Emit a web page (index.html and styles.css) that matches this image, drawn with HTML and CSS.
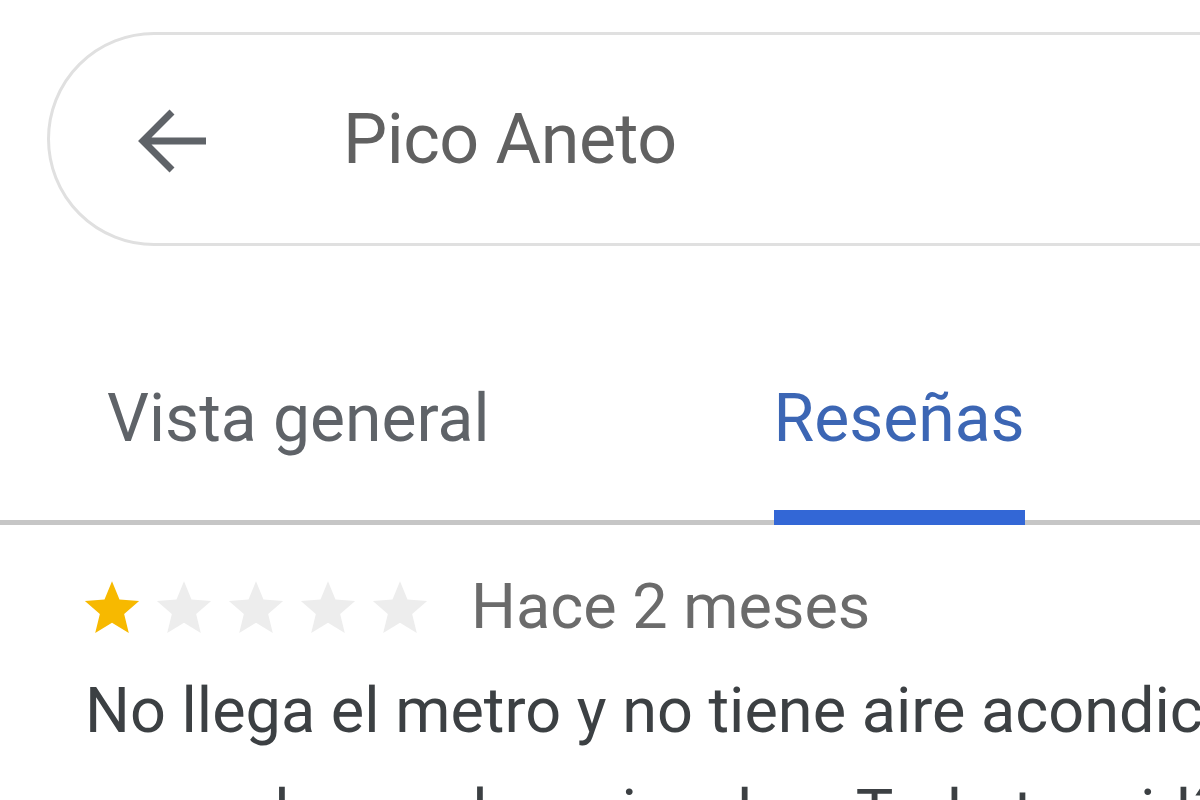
FILE: index.html
```html
<!DOCTYPE html>
<html lang="es">

<head>
    <meta charset="UTF-8">
    <meta name="viewport" content="width=device-width, initial-scale=1.0">
    <title>Pico Aneto - Reseñas</title>
    <link rel="stylesheet" href="styles.css">
</head>

<body>

    <!-- barra de busqueda -->
    <div class="search-wrap">
        <div class="search-box">
            <div class="back-btn">
                <svg width="72" height="66" viewBox="0 0 72 66">
                    <path d="M68 33 H6 M34 4 L5 33 L34 62" fill="none" stroke="#5f6368" stroke-width="7"
                        stroke-linecap="butt" stroke-linejoin="miter" />
                </svg>
            </div>
            <div class="search-text">Pico Aneto</div>
        </div>
    </div>

    <!-- pestañas -->
    <nav class="tabs">
        <a href="" class="tab">Vista general</a>
        <a href="" class="tab active">Reseñas</a>
    </nav>

    <!-- reseña -->
    <div class="review">
        <div class="review-head">
            <div class="stars">
                <svg class="star gold" viewBox="0 0 24 24"><path d="M12 2l2.9 7.1 7.6.6-5.8 5 1.8 7.4L12 18.1 5.5 22.1l1.8-7.4-5.8-5 7.6-.6z"/></svg>
                <svg class="star" viewBox="0 0 24 24"><path d="M12 2l2.9 7.1 7.6.6-5.8 5 1.8 7.4L12 18.1 5.5 22.1l1.8-7.4-5.8-5 7.6-.6z"/></svg>
                <svg class="star" viewBox="0 0 24 24"><path d="M12 2l2.9 7.1 7.6.6-5.8 5 1.8 7.4L12 18.1 5.5 22.1l1.8-7.4-5.8-5 7.6-.6z"/></svg>
                <svg class="star" viewBox="0 0 24 24"><path d="M12 2l2.9 7.1 7.6.6-5.8 5 1.8 7.4L12 18.1 5.5 22.1l1.8-7.4-5.8-5 7.6-.6z"/></svg>
                <svg class="star" viewBox="0 0 24 24"><path d="M12 2l2.9 7.1 7.6.6-5.8 5 1.8 7.4L12 18.1 5.5 22.1l1.8-7.4-5.8-5 7.6-.6z"/></svg>
            </div>
            <span class="review-date">Hace 2 meses</span>
        </div>
        <p class="review-text">No llega el metro y no tiene aire acondicionado<br>cansado y no hay ni un bar. Todo tan ridículo</p>
    </div>

</body>

</html>
```

FILE: styles.css
```css
* {
    font-family: Roboto, "Liberation Sans", sans-serif;
    text-decoration: none;
    box-sizing: border-box;
}

body {
    margin: 0;
    padding: 0;
    background-color: #ffffff;
    width: 1200px;
    height: 800px;
    overflow: hidden;
}

/* search bar */
.search-wrap {
    padding: 32px 0 0 47px;
    height: 360px;
}

.search-box {
    display: flex;
    align-items: center;
    width: 1300px;
    height: 214px;
    border: 3px solid #e0e0e0;
    border-radius: 107px;
    padding-left: 88px;
}

.back-btn {
    display: flex;
    align-items: center;
    width: 72px;
    height: 66px;
    margin-top: 4px;
}

.search-text {
    margin-left: 133px;
    margin-top: 0;
    font-size: 70px;
    color: #616161;
    letter-spacing: -0.5px;
}

/* tabs */
.tabs {
    display: flex;
    align-items: flex-end;
    border-bottom: 5px solid #c6c6c6;
    padding-left: 107px;
    height: 165px;
}

.tab {
    font-size: 66px;
    color: #5f6368;
    padding-bottom: 58px;
    margin-bottom: -5px;
    border-bottom: 15px solid transparent;
    line-height: 1;
}

.tab + .tab {
    margin-left: 284px;
}

.tab.active {
    color: #3c66b4;
    border-bottom-color: #3367d6;
    border-radius: 4px 4px 0 0;
}

/* review */
.review {
    padding: 50px 0 0 81px;
}

.review-head {
    display: flex;
    align-items: center;
    gap: 40px;
}

.stars {
    display: flex;
    gap: 10px;
}

.star {
    width: 62px;
    height: 62px;
    fill: #ededed;
}

.star.gold {
    fill: #f7b900;
}

.review-date {
    font-size: 63px;
    color: #6b6b6b;
    line-height: 1;
}

.review-text {
    margin: 22px 0 0 4px;
    font-size: 63px;
    line-height: 102px;
    color: #3c4043;
    white-space: nowrap;
}
```
